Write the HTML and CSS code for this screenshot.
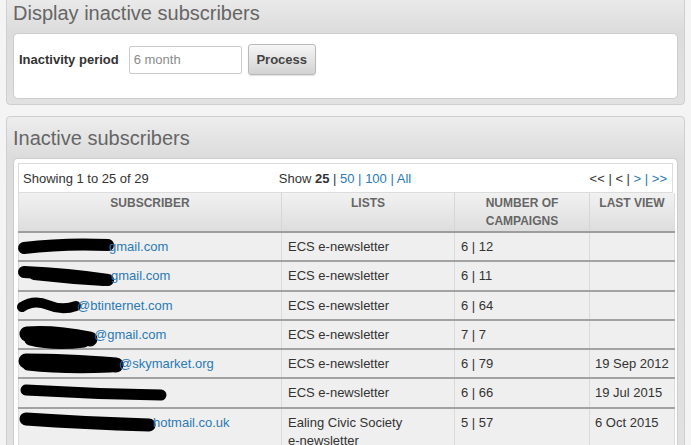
FILE: index.html
```html
<!DOCTYPE html>
<html>
<head>
<meta charset="utf-8">
<link rel="stylesheet" href="styles.css">
</head>
<body>
<div class="page">
  <section class="panel panel-first">
    <h2 class="panel-title">Display inactive subscribers</h2>
    <div class="panel-body">
      <form class="filter">
        <label class="filter-label">Inactivity period</label>
        <input class="filter-input" type="text" placeholder="6 month">
        <button class="btn" type="button">Process</button>
      </form>
    </div>
  </section>

  <section class="panel">
    <h2 class="panel-title">Inactive subscribers</h2>
    <div class="panel-body panel-body-table">
      <div class="table-bar">
        <span class="bar-left">Showing 1 to 25 of 29</span>
        <span class="bar-center">Show <b>25</b> | <a>50</a> <a>|</a> <a>100</a> <a>|</a> <a>All</a></span>
        <span class="bar-right">&lt;&lt; | &lt; | <a>&gt;</a> <a>|</a> <a>&gt;&gt;</a></span>
      </div>
      <table class="grid">
        <colgroup>
          <col class="c1"><col class="c2"><col class="c3"><col class="c4">
        </colgroup>
        <thead>
          <tr>
            <th>SUBSCRIBER</th>
            <th>LISTS</th>
            <th>NUMBER OF<br>CAMPAIGNS</th>
            <th>LAST VIEW</th>
          </tr>
        </thead>
        <tbody>
          <tr>
            <td><svg class="blob" width="85" height="18"><path class="w12" d="M0 10 Q 40 5 84 7" /></svg><a>gmail.com</a></td>
            <td>ECS e-newsletter</td><td>6 | 12</td><td></td>
          </tr>
          <tr>
            <td><svg class="blob" width="87" height="18"><path class="w12" d="M0 5 Q 45 7 84 13" /><path class="w9" d="M10 8 Q 45 12 80 14" /></svg><a>gmail.com</a></td>
            <td>ECS e-newsletter</td><td>6 | 11</td><td></td>
          </tr>
          <tr>
            <td><svg class="blob" width="53" height="18"><path class="w9" d="M-2 10 Q 10 2 24 8 T 52 9" /></svg><a>@btinternet.com</a></td>
            <td>ECS e-newsletter</td><td>6 | 64</td><td></td>
          </tr>
          <tr>
            <td><svg class="blob" width="70" height="18"><path class="w14" d="M3 8 Q 30 6 66 13" /><path class="w11" d="M6 14 Q 30 20 60 16" /></svg><a>@gmail.com</a></td>
            <td>ECS e-newsletter</td><td>7 | 7</td><td></td>
          </tr>
          <tr>
            <td><svg class="blob" width="95" height="18"><path class="w16" d="M2 6 Q 40 6 92 10" /><path class="w11" d="M4 10 Q 40 14 86 12" /></svg><a>@skymarket.org</a></td>
            <td>ECS e-newsletter</td><td>6 | 79</td><td>19 Sep 2012</td>
          </tr>
          <tr>
            <td><svg class="blob" width="145" height="18"><path class="w11" d="M2 6 Q 70 10 137 11" /></svg></td>
            <td>ECS e-newsletter</td><td>6 | 66</td><td>19 Jul 2015</td>
          </tr>
          <tr>
            <td><svg class="blob" width="129" height="18"><path class="w13" d="M2 5 Q 60 9 125 11" /></svg><a>hotmail.co.uk</a></td>
            <td>Ealing Civic Society <span class="nowrap">e-newsletter</span></td><td>5 | 57</td><td>6 Oct 2015</td>
          </tr>
        </tbody>
      </table>
    </div>
  </section>
</div>
</body>
</html>
```
FILE: styles.css
```css
html, body {
  margin: 0;
  padding: 0;
}
body {
  background: #f4f4f4;
  font-family: "Liberation Sans", Arial, sans-serif;
  font-size: 13px;
  color: #333;
  overflow: hidden;
}
.page {
  padding: 0 6px;
}
.panel {
  border: 1px solid #cfcfcf;
  border-radius: 4px;
  background: linear-gradient(#ededed 0, #dcdcdc 40px, #e1e1e1 100%);
  padding: 9px 6px 5px 6px;
  margin-top: 11px;
}
.panel-first {
  margin-top: -9px;
}
.panel-title {
  margin: 0 0 8px 0;
  font-size: 20px;
  line-height: 24px;
  font-weight: normal;
  color: #666;
  padding-left: 0;
}
.panel-body {
  background: #fff;
  border: 1px solid #cdcdcd;
  border-radius: 5px;
  padding: 10px 5px 23px 5px;
}
.panel-body-table {
  padding: 4px 4px 0 4px;
  border-bottom: none;
  border-radius: 5px 5px 0 0;
}
.filter {
  display: flex;
  align-items: center;
  margin: 0;
}
.filter-label {
  font-weight: bold;
  color: #333;
  margin-right: 10px;
}
.filter-input {
  box-sizing: border-box;
  width: 113px;
  height: 28px;
  border: 1px solid #cccccc;
  border-radius: 2px;
  padding: 0 4px;
  font-family: "Liberation Sans", Arial, sans-serif;
  font-size: 13px;
  color: #333;
  margin: 0 6px 0 0;
}
.filter-input::placeholder {
  color: #8a8a8a;
}
.btn {
  box-sizing: border-box;
  width: 68px;
  height: 31px;
  border: 1px solid #b9b9b9;
  border-radius: 3px;
  background: linear-gradient(#f6f6f6, #d2d2d2);
  box-shadow: 0 1px 1px rgba(0,0,0,0.12);
  font-family: "Liberation Sans", Arial, sans-serif;
  font-size: 13px;
  font-weight: bold;
  color: #444;
  padding: 0;
}
.table-bar {
  display: grid;
  grid-template-columns: 1fr auto 1fr;
  align-items: center;
  height: 28px;
  border: 1px solid #dcdcdc;
  padding: 0 5px 0 4px;
  background: #fff;
}
.bar-center {
  text-align: center;
}
.bar-right {
  text-align: right;
}
.table-bar b {
  font-weight: bold;
  color: #333;
}
a {
  color: #2a7ab4;
  text-decoration: none;
}
.grid {
  width: 100%;
  border-collapse: collapse;
  table-layout: fixed;
  border-left: 1px solid #dcdcdc;
  border-right: 1px solid #dcdcdc;
}
.c1 { width: 263px; }
.c2 { width: 173px; }
.c3 { width: 135px; }
.c4 { width: 85px; }
.grid th {
  background: linear-gradient(#f1f1f1, #dddddd);
  color: #666;
  font-size: 12px;
  font-weight: bold;
  line-height: 18px;
  padding: 1px 5px 1px 5px;
  vertical-align: top;
  text-align: center;
  border-right: 1px solid #d6d6d6;
  border-bottom: 2px solid #9d9d9d;
}
.grid td {
  background: #efefef;
  line-height: 18px;
  padding: 5px 5px 4.3px 6px;
  vertical-align: top;
  border-right: 1px solid #dadada;
  border-bottom: 2px solid #a2a2a2;
  white-space: normal;
}
.grid td:first-child {
  padding-left: 5px;
  white-space: nowrap;
}
.grid td:last-child {
  padding: 5px 0 4.3px 5px;
  white-space: nowrap;
}
.nowrap {
  white-space: nowrap;
}
.grid th:last-child, .grid td:last-child {
  border-right: none;
}
.blob {
  display: inline-block;
  vertical-align: top;
  overflow: visible;
}
.blob path {
  fill: none;
  stroke: #000;
  stroke-width: 11;
  stroke-linecap: round;
}
.blob path.w9 { stroke-width: 10; }
.blob path.w11 { stroke-width: 11; }
.blob path.w12 { stroke-width: 12; }
.blob path.w13 { stroke-width: 13; }
.blob path.w14 { stroke-width: 15; }
.blob path.w16 { stroke-width: 15; }
```
